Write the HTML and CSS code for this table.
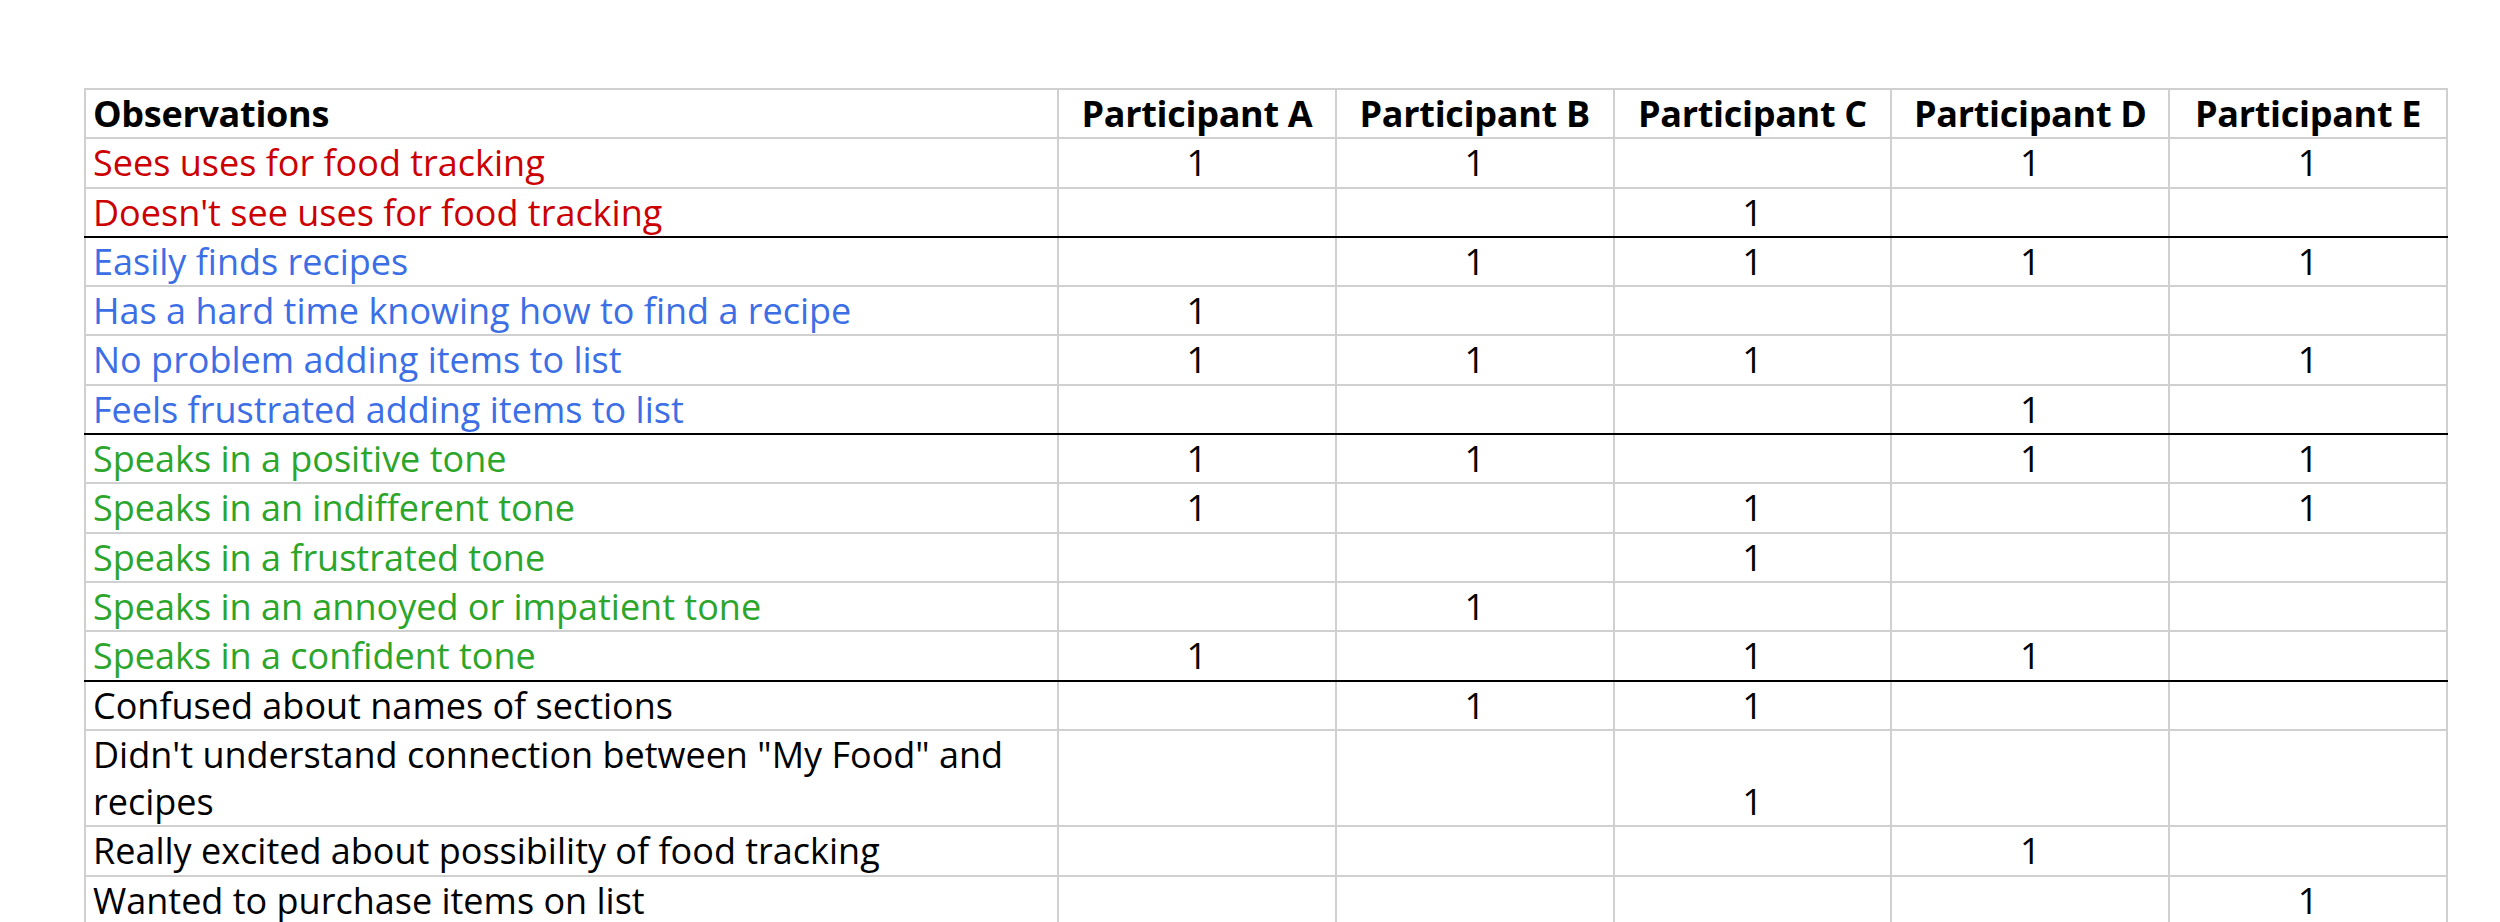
FILE: index.html
```html
<!DOCTYPE html>
<html lang="en">
<head>
<meta charset="utf-8">
<title>Observations</title>
<link rel="stylesheet" href="styles.css">
</head>
<body>
<table class="sheet">
  <colgroup>
    <col class="col-obs">
    <col class="col-p"><col class="col-p"><col class="col-p"><col class="col-p"><col class="col-p">
  </colgroup>
  <thead>
    <tr>
      <th class="obs">Observations</th>
      <th>Participant A</th>
      <th>Participant B</th>
      <th>Participant C</th>
      <th>Participant D</th>
      <th>Participant E</th>
    </tr>
  </thead>
  <tbody>
    <tr class="red"><td class="obs">Sees uses for food tracking</td><td>1</td><td>1</td><td></td><td>1</td><td>1</td></tr>
    <tr class="red sep"><td class="obs">Doesn't see uses for food tracking</td><td></td><td></td><td>1</td><td></td><td></td></tr>
    <tr class="blue"><td class="obs">Easily finds recipes</td><td></td><td>1</td><td>1</td><td>1</td><td>1</td></tr>
    <tr class="blue"><td class="obs">Has a hard time knowing how to find a recipe</td><td>1</td><td></td><td></td><td></td><td></td></tr>
    <tr class="blue"><td class="obs">No problem adding items to list</td><td>1</td><td>1</td><td>1</td><td></td><td>1</td></tr>
    <tr class="blue sep"><td class="obs">Feels frustrated adding items to list</td><td></td><td></td><td></td><td>1</td><td></td></tr>
    <tr class="green"><td class="obs">Speaks in a positive tone</td><td>1</td><td>1</td><td></td><td>1</td><td>1</td></tr>
    <tr class="green"><td class="obs">Speaks in an indifferent tone</td><td>1</td><td></td><td>1</td><td></td><td>1</td></tr>
    <tr class="green"><td class="obs">Speaks in a frustrated tone</td><td></td><td></td><td>1</td><td></td><td></td></tr>
    <tr class="green"><td class="obs">Speaks in an annoyed or impatient tone</td><td></td><td>1</td><td></td><td></td><td></td></tr>
    <tr class="green sep"><td class="obs">Speaks in a confident tone</td><td>1</td><td></td><td>1</td><td>1</td><td></td></tr>
    <tr><td class="obs">Confused about names of sections</td><td></td><td>1</td><td>1</td><td></td><td></td></tr>
    <tr><td class="obs">Didn't understand connection between "My Food" and recipes</td><td></td><td></td><td>1</td><td></td><td></td></tr>
    <tr><td class="obs">Really excited about possibility of food tracking</td><td></td><td></td><td></td><td>1</td><td></td></tr>
    <tr><td class="obs">Wanted to purchase items on list</td><td></td><td></td><td></td><td></td><td>1</td></tr>
  </tbody>
</table>
</body>
</html>
```

FILE: styles.css
```css
html, body {
  margin: 0;
  padding: 0;
  background: #ffffff;
}

body {
  padding: 88px 0 0 84px;
  font-family: "Open Sans", Lato, "Liberation Sans", sans-serif;
  color: #000000;
}

.sheet {
  border-collapse: collapse;
  table-layout: fixed;
  width: 2362px;
}

.col-obs { width: 973px; }
.col-p { width: 277.8px; }

.sheet th,
.sheet td {
  border: 2px solid #d0d0d0;
  padding: 0 7px;
  font-size: 36px;
  line-height: 47.3px;
  vertical-align: bottom;
  text-align: center;
  white-space: nowrap;
  overflow: hidden;
  font-variant-ligatures: none;
}

.sheet th {
  font-weight: 700;
  letter-spacing: -0.3px;
}

.sheet .obs {
  text-align: left;
  white-space: normal;
}

.sheet tr.sep td {
  border-bottom: 2px solid #000000;
}

.red .obs { color: #cc0000; }
.blue .obs { color: #3c6fe6; }
.green .obs { color: #2ba52a; }
```
